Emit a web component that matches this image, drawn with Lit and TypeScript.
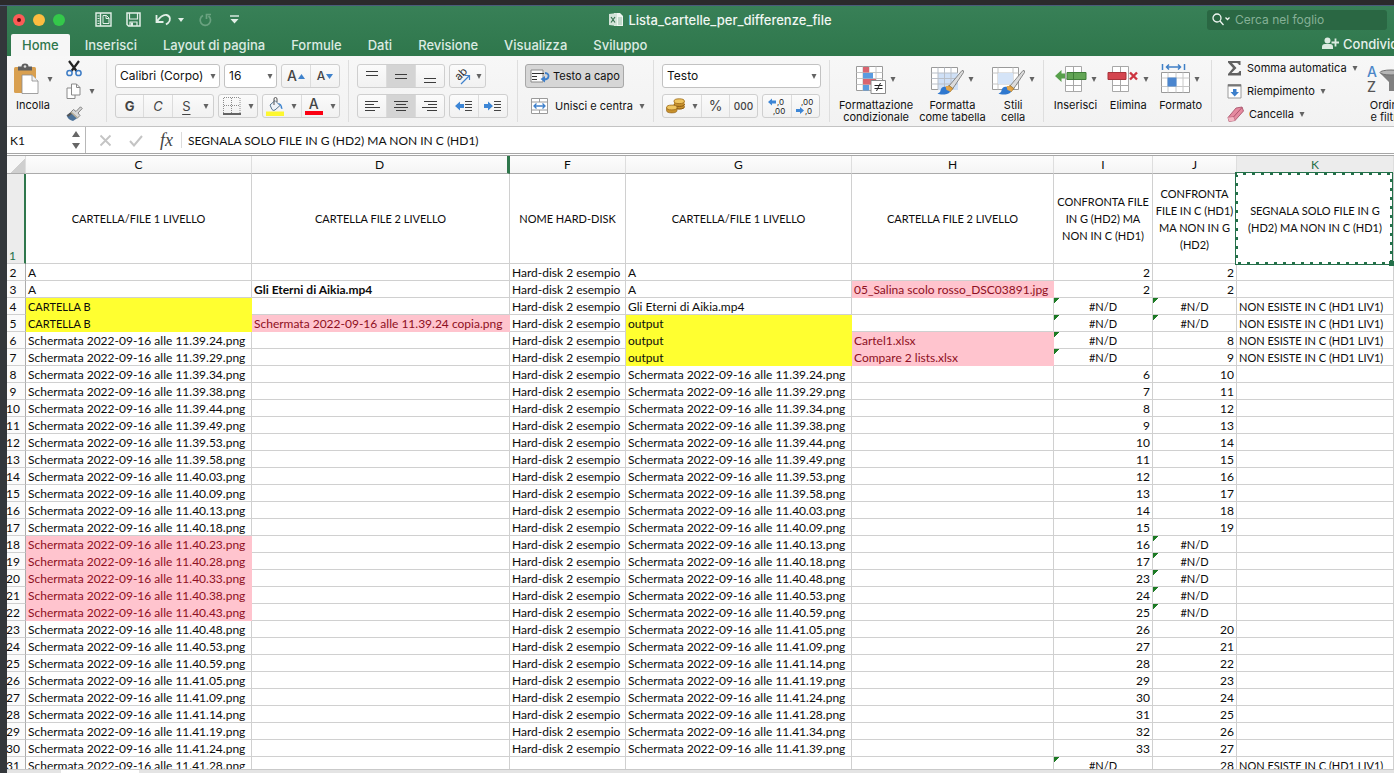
import { LitElement, html, svg, css, nothing } from "lit";
import { customElement, property } from "lit/decorators.js";
import { classMap } from "lit/directives/class-map.js";

type Tone = "plain" | "caps" | "yellow" | "yellow caps" | "pink" | "bold" | "num" | "error";
interface Cell { text: string; tone: Tone; }

const COLUMNS = ["C", "D", "F", "G", "H", "I", "J", "K"];
const HEADINGS = [
  "CARTELLA/FILE 1 LIVELLO",
  "CARTELLA FILE 2 LIVELLO",
  "NOME HARD-DISK",
  "CARTELLA/FILE 1 LIVELLO",
  "CARTELLA FILE 2 LIVELLO",
  "CONFRONTA FILE IN G (HD2) MA NON IN C (HD1)",
  "CONFRONTA FILE IN C (HD1) MA NON IN G (HD2)",
  "SEGNALA SOLO FILE IN G (HD2) MA NON IN C (HD1)",
];

const TIMES_C = "39.24 39.29 39.34 39.38 39.44 39.49 39.53 39.58 40.03 40.09 40.13 40.18 40.23 40.28 40.33 40.38 40.43 40.48 40.53 40.59 41.05 41.09 41.14 41.19 41.24 41.28".split(" ");
const TIMES_G = "39.24 39.29 39.34 39.38 39.44 39.49 39.53 39.58 40.03 40.09 40.13 40.18 40.48 40.53 40.59 41.05 41.09 41.14 41.19 41.24 41.28 41.34 41.39".split(" ");
const shot = (t: string) => `Schermata 2022-09-16 alle 11.${t}.png`;
const cell = (text: string | number = "", tone: Tone = "plain"): Cell => ({ text: String(text), tone });
const ND = cell("#N/D", "error");

function columnC(r: number): Cell {
  if (r < 4) return cell("A");
  if (r < 6) return cell("CARTELLA B", "yellow caps");
  return cell(shot(TIMES_C[r - 6]), r >= 18 && r <= 22 ? "pink" : "plain");
}
function columnD(r: number): Cell {
  if (r === 3) return cell("Gli Eterni di Aikia.mp4", "bold");
  if (r === 5) return cell("Schermata 2022-09-16 alle 11.39.24 copia.png", "pink");
  return cell();
}
function columnG(r: number): Cell {
  if (r < 4) return cell("A");
  if (r === 4) return cell("Gli Eterni di Aikia.mp4");
  if (r < 8) return cell("output", "yellow");
  return r < 31 ? cell(shot(TIMES_G[r - 8])) : cell();
}
function columnH(r: number): Cell {
  if (r === 3) return cell("05_Salina scolo rosso_DSC03891.jpg", "pink");
  if (r === 6) return cell("Cartel1.xlsx", "pink");
  if (r === 7) return cell("Compare 2 lists.xlsx", "pink");
  return cell();
}
function columnI(r: number): Cell {
  if (r < 4) return cell(2, "num");
  if (r < 8 || r === 31) return ND;
  return cell(r < 20 ? r - 2 : r + 3, "num");
}
function columnJ(r: number): Cell {
  if (r < 4) return cell(2, "num");
  if (r < 6 || (r >= 18 && r <= 22)) return ND;
  return cell(r < 18 ? r + 2 : r - 3, "num");
}
function columnK(r: number): Cell {
  return (r >= 4 && r <= 7) || r === 31 ? cell("NON ESISTE IN C (HD1 LIV1)", "caps") : cell();
}
const ROWS = Array.from({ length: 30 }, (_, i) => i + 2).map((r) => ({
  number: r,
  cells: [columnC(r), columnD(r), cell(r < 31 ? "Hard-disk 2 esempio" : ""), columnG(r), columnH(r), columnI(r), columnJ(r), columnK(r)],
}));

const icon = (w: number, h: number, body: unknown) =>
  html`<svg width=${w} height=${h} viewBox="0 0 ${w} ${h}" fill="none" aria-hidden="true">${body}</svg>`;

const arrow = html`<svg width="6" height="5" viewBox="0 0 6 5" aria-hidden="true"><path d="M.5 0h5L3 5z" fill="#636363"/></svg>`;

const lines = (rows: number[][]) =>
  icon(18, 16, svg`${rows.map(([x, y, w]) => svg`<path d="M${x} ${y + 0.5}h${w}" stroke="#3c3c3c"/>`)}`);

const brush = svg`
  <path d="M31 6.500 18 22l3.500 3L32.500 8.500q.6-2.500-1.500-2z" fill="#dcdcdc" stroke="#707070" stroke-width=".8"/>
  <path d="m18 21.500-3 2 4 4.500 3-3.500z" fill="#e0a040" stroke="#8a6420" stroke-width=".6"/>
  <path d="M15 23c-3-1-5 1-5.500 3.500-.3 2-1.500 2.500-3 3 3 1.800 10 1.500 12.500-1.500z" fill="#2f78cf"/>
  <path d="M14.500 22.500c2-1.500 6 1 5 5l-4-1.500z" fill="#e3a64c"/>`;

const ICONS = {
  sidebar: icon(17, 15, svg`<path d="M1 1h15v13H1zM5.500 1v13" stroke="#e3efe8" stroke-width="1.400"/><path d="M2.500 4h2M2.500 6.500h2M2.500 9h2M2.500 11.500h2" stroke="#e3efe8"/><path d="M8 3.500h3.500L14 6v5.500H8zM11 3.500V6.500h3" stroke="#e3efe8"/>`),
  save: icon(15, 15, svg`<path d="M1 1h13v13H2.500L1 12.500z" stroke="#e3efe8" stroke-width="1.500"/><path d="M3.500 1v6h8V1" stroke="#e3efe8" stroke-width="1.200"/><path d="M4 14v-4h7v4" stroke="#e3efe8" stroke-width="1.200"/><path d="M5 10.500h2V14H5z" fill="#e3efe8"/>`),
  undo: icon(17, 13, svg`<path d="M1.500 2v7h7M2 8.500C5 4 8 1.500 11.500 2c4 .8 4.500 5.500 1.500 8l-2 1.500" stroke="#e3efe8" stroke-width="1.800"/>`),
  redo: icon(14, 15, svg`<path d="M5 3.500A5.200 5.200 0 1 0 10.500 4M13 2.500H8.500V7" stroke="#6aa280" stroke-width="1.700"/>`),
  more: icon(9, 9, svg`<path d="M0 1h9" stroke="#e3efe8" stroke-width="1.400"/><path d="M.5 4h8l-4 4.500z" fill="#e3efe8"/>`),
  smallArrow: icon(6, 4, svg`<path d="M0 0h6L3 4z" fill="#e3efe8"/>`),
  workbook: icon(14, 15, svg`<path d="M5 1h6l3 3v10H5z" fill="#eef5f0"/><path d="M9 6h4M9 8h4M9 10h4M9 12h4" stroke="#7fae92" stroke-width=".8"/><path d="M0 2l8-1v13l-8-1z" fill="#d3e3d9"/><path d="m2 5 4 5.500M6 5l-4 5.500" stroke="#35704e" stroke-width="1.200"/>`),
  search: icon(19, 13, svg`<circle cx="5" cy="5" r="4" stroke="#f0f6f2" stroke-width="1.300"/><path d="m8 8 3.500 4M13.500 4.500 15.500 6.500 17.500 4.500" stroke="#f0f6f2" stroke-width="1.300"/>`),
  person: icon(17, 13, svg`<circle cx="5.500" cy="3.500" r="3" fill="#dcebe2"/><path d="M0 12V10q0-3 3-3h5q3 0 3 3v2z" fill="#dcebe2"/><path d="M13.500 1.500v8M9.500 5.500h8" stroke="#dcebe2" stroke-width="1.800"/>`),
  paste: icon(26, 32, svg`<rect x="1" y="4" width="22" height="26" rx="1.500" fill="#d9a050"/><path d="M5 3.500h3.500a3.500 3 0 0 1 7 0H19v4H5z" fill="#5e5e5e"/><circle cx="12" cy="3.500" r="1.300" fill="#ddd"/><path d="M9 12h10l6 6v12.500H9z" fill="#fff" stroke="#8a8a8a" stroke-width=".8"/><path d="M19 12v6h6" stroke="#8a8a8a" stroke-width=".8" fill="#f2f2f2"/>`),
  cut: icon(16, 17, svg`<path d="M3 1 10.500 11M13 1 5.500 11" stroke="#222" stroke-width="2.200"/><circle cx="3.500" cy="13" r="2.600" stroke="#3d7cc5" stroke-width="1.500"/><circle cx="12.500" cy="13" r="2.600" stroke="#3d7cc5" stroke-width="1.500"/>`),
  copy: icon(16, 17, svg`<path d="M1 5h5l3 3v7.500H1z" fill="#fff" stroke="#8a8a8a"/><path d="M5.500 1h5l3.500 3.500V12H5.500z" fill="#fff" stroke="#8a8a8a"/><path d="M10.500 1v3.500H14" stroke="#8a8a8a"/>`),
  painter: icon(17, 16, svg`<path d="m14.500.8-4.500 4.700-2.500-2L5 6l6.500 6 2.500-2.500-2-2.500L16.200 2.500z" fill="#d8d8d8" stroke="#777" stroke-width=".9"/><path d="M5 6 .5 9.500q2 4.500 6.500 5.500l4.500-3z" fill="#4d7299"/><path d="M5 6 .8 9.300l1.500 1.500L6.500 7.400z" fill="#555"/><path d="m4.800 6 6.500 6" stroke="#b9b09a" stroke-width="1.400"/>`),
  borders: icon(18, 18, svg`<path d="M1 .5h16M1 8.500h16M.5 1v16M8.500 1v16M17 1v16" stroke="#8c8c8c" stroke-dasharray="1 1"/><path d="M0 17h18" stroke="#333" stroke-width="1.500"/>`),
  fill: icon(18, 19, svg`<path d="m4 8 5-4.500 5 5-5 4.500q-2 1-3-.5z" fill="#eef3f8" stroke="#58768f"/><path d="M8 8V2q0-1.500 1.500-1.500T11 2v3" stroke="#555"/><path d="M12 6q4 0 4.500 6-2 .5-2-3z" fill="#3c83cf"/><path d="M0 14.500h18V19H0z" fill="#fdf730"/>`),
  orient: icon(19, 18, svg`<text x="0" y="0" transform="translate(6 14) rotate(-45)" font-size="11" font-family="Inter, sans-serif" fill="#333">ab</text><path d="m8 17 8-8M11.500 8.500H16.500v4.500" stroke="#3f82cc" stroke-width="1.200"/>`),
  indentOut: icon(18, 14, svg`<path d="M10 2.500h7M10 5.500h7M10 8.500h7M10 11.500h7" stroke="#444"/><path d="m0 7 5-4.500v2.500h4v4H5v2.500z" fill="#3d86d6"/>`),
  indentIn: icon(18, 14, svg`<path d="M10 2.500h7M10 5.500h7M10 8.500h7M10 11.500h7" stroke="#444"/><path d="M9 7 4 2.500V5H0v4h4v2.500z" fill="#3d86d6"/>`),
  wrap: icon(20, 14, svg`<path d="M1 1h12v12H1z" fill="#fafafa" stroke="#8a8a8a"/><path d="M2 4.500h12M2 7.500h5M2 10.500h5" stroke="#333"/><path d="M15 4q4 .5 3.500 3.500T14 10.500" stroke="#3d7fcb" stroke-width="1.800"/><path d="M15 7v6.500L10.500 10z" fill="#3d7fcb"/>`),
  merge: icon(18, 17, svg`<path d="M.5.5h16v15H.5z" fill="#fff" stroke="#9a9a9a"/><path d="M1 4h15M1 12h15M8.500 1v3M8.500 12v3" stroke="#9a9a9a"/><path d="M4 8h9M5.500 5.500 3 8l2.500 2.500M11.500 5.500 14 8l-2.500 2.500" stroke="#3d7fcb" stroke-width="1.300"/>`),
  coins: icon(19, 16, svg`<path d="M8 3v6a5.200 2.400 0 0 0 10.500 0V3z" fill="#c8912c"/><path d="M8 6a5.200 2.400 0 0 0 10.500 0M8 8.500a5.200 2.400 0 0 0 10.500 0" stroke="#8a5a14"/><ellipse cx="13.200" cy="3.200" rx="5.200" ry="2.400" fill="#efc560" stroke="#9b6a1c" stroke-width=".8"/><path d="M.5 9.500v3a5.200 2.400 0 0 0 10.500 0v-3z" fill="#c8912c" stroke="#8a5a14" stroke-width=".6"/><ellipse cx="5.800" cy="9.500" rx="5.200" ry="2.400" fill="#efc560" stroke="#9b6a1c" stroke-width=".8"/>`),
  decUp: icon(18, 18, svg`<path d="m0 5 4-3.500v2h4v3H4v2z" fill="#3d86d6"/><text x="9" y="8" font-size="8" font-family="Inter, sans-serif" fill="#222">,0</text><text x="5" y="17" font-size="8" font-family="Inter, sans-serif" fill="#222">,00</text>`),
  decDown: icon(18, 18, svg`<path d="m8 13.500-4-3.500v2H0v3h4v2z" fill="#3d86d6"/><text x="5" y="8" font-size="8" font-family="Inter, sans-serif" fill="#222">,00</text><text x="9" y="17" font-size="8" font-family="Inter, sans-serif" fill="#222">,0</text>`),
  conditional: icon(30, 30, svg`<path d="M.5 2.500h26v24H.5z" fill="#fff" stroke="#9a9a9a"/><path d="M.5 8.500h26M.5 14.500h26M.5 20.500h26M7 2.500v24M13 2.500v24M20 2.500v24" stroke="#c4c4c4"/><path d="M7 3h6v5.500H7zM7 15h13v5.500H7z" fill="#d96470"/><path d="M7 9h10v5.500H7zM7 21h6v5.500H7z" fill="#5a9be0"/><path d="M15 16.500h14.500v13H15z" fill="#fff" stroke="#8a8a8a"/><path d="M18.500 21.500h8M18.500 24.500h8M24.500 19l-4 8" stroke="#222"/>`),
  tableFormat: icon(33, 31, svg`<path d="M.5 3.500h26v22H.5z" fill="#fff" stroke="#9a9a9a"/><path d="M7 9h20v17H7z" fill="#cfe0f6"/><path d="M.5 9h26M.5 14.500h26M.5 20h26M7 3.500v22M13.500 3.500v22M20 3.500v22" stroke="#b9bfc8"/>${brush}`),
  cellStyles: icon(33, 31, svg`<path d="M.5 3.500h26v22H.5z" fill="#fff" stroke="#9a9a9a"/><path d="M.5 9h26M.5 20h26M6 3.500v22M21 3.500v22" stroke="#c4c4c4"/><path d="M6 9h15v11H6z" fill="#d5e4f7"/>${brush}`),
  insert: icon(32, 28, svg`<path d="M10.500 1.500h16v25h-16zM18.500 1.500v25M10.500 20.500h16M10.500 14h16" fill="#fff" stroke="#a8a8a8"/><path d="M12 7.500h19v7H12z" fill="#62a555" stroke="#3f7d38"/><path d="M18.500 8v6" stroke="#3f7d38"/><path d="m0 11 6.500-6v3.500H10v5H6.500V17z" fill="#57a04b"/>`),
  remove: icon(32, 28, svg`<path d="M5.500 1.500h16v25h-16zM13.500 1.500v25M5.500 20.500h16" fill="#fff" stroke="#a8a8a8"/><path d="M1 7.500h18v7H1z" fill="#d4454f" stroke="#a8333b"/><path d="m23 7.500 7 7M30 7.500l-7 7" stroke="#cd3540" stroke-width="2.400"/>`),
  format: icon(29, 30, svg`<path d="M.5 8.500h28v20H.5z" fill="#fff" stroke="#9a9a9a"/><path d="M.5 14h28M.5 22.500h28M7 8.500v20M15 8.500v20M22 8.500v20" stroke="#c8c8c8"/><path d="M6.500 13.500h9v9h-9z" fill="#4b86cf"/><path d="M1.500 0v6M23.500 0v6M6 3h13M8 .5 5.500 3 8 5.500M17 .5 19.500 3 17 5.500" stroke="#3f7fc6" stroke-width="1.500"/>`),
  sum: icon(15, 16, svg`<path d="M1 1h12.500v4H12Q11.500 3 9.500 3H5l4.500 5L4.500 13H10q2 0 2.500-2H14v4.500H1V14l5-6-5-5.500z" fill="#606060"/>`),
  down: icon(15, 16, svg`<path d="M1 1.500h13v13.500H1z" fill="#fff" stroke="#9a9a9a"/><path d="M1 2.500h13" stroke="#777" stroke-width="2"/><path d="M6 6h3.500v3H12l-4.300 4.500L3.500 9H6z" fill="#3d7fcb"/>`),
  eraser: icon(17, 16, svg`<path d="M1 11.500 9 2l6-1 1.500 4L8 14.500l-6 1z" fill="#e58aa0" stroke="#a04a62" stroke-width=".8"/><path d="m1.500 11.500 5-.5 1.500 4M6.500 11 15 1.500" stroke="#a04a62" stroke-width=".8"/><path d="m1 11.500 5.500-.5 1.500 3.500-6 1z" fill="#f3b6c3"/>`),
  sort: icon(40, 32, svg`<text x="0" y="14" font-size="14" font-weight="500" font-family="Inter, sans-serif" fill="#4a86c8">A</text><text x="0" y="29" font-size="14" font-weight="500" font-family="Inter, sans-serif" fill="#555">Z</text><path d="M13 10h22l-8 9v9h-5v-9z" fill="#808080"/><ellipse cx="24" cy="9.500" rx="11" ry="2.500" fill="#b5b5b5" stroke="#707070"/>`),
  cancel: icon(13, 13, svg`<path d="m1.500 1.500 10 10M11.500 1.500l-10 10" stroke="#c4c4c4" stroke-width="1.800"/>`),
  confirm: icon(14, 13, svg`<path d="m1 7 4 4.500L13 2" stroke="#c4c4c4" stroke-width="2"/>`),
};

@customElement("excel-titlebar")
class ExcelTitlebar extends LitElement {
  static styles = css`
    :host { display: block; background: linear-gradient(#388057, #2f774c); color: #dcebe2; font-family: Inter, "Liberation Sans", sans-serif; }
    button { border: 0; padding: 0; background: none; color: inherit; font: inherit; display: flex; align-items: center; }
    svg { flex: none; display: block; }
    .bar { display: flex; height: 27px; align-items: center; }
    .tools { width: 240px; flex: none; display: flex; align-items: center; padding-left: 6px; box-sizing: border-box; }
    .lights { display: flex; gap: 8px; margin-right: 30px; }
    .light { width: 12px; height: 12px; border-radius: 50%; justify-content: center; }
    .close { background: #fc5b57; }
    .close::after { content: ""; width: 4px; height: 4px; border-radius: 50%; background: #5b0a08; }
    .min { background: #fdbc40; }
    .max { background: #34c84a; }
    .quick { display: flex; align-items: center; gap: 14px; }
    .undo { gap: 6px; }
    .redo { margin-right: 4px; }
    .title { flex: 1; margin: 0; display: flex; justify-content: center; align-items: center; gap: 5px; font-size: 13px; font-weight: 500; color: #f0f6f2; }
    .find { width: 200px; flex: none; box-sizing: border-box; padding: 0 7px 0 13px; }
    .field { display: flex; align-items: center; gap: 4px; height: 20px; background: #2a6743; border-radius: 3px; padding-left: 5px; }
    .field input { flex: 1; min-width: 0; border: 0; outline: 0; background: none; color: #fff; font: 12px Inter, sans-serif; padding: 0; }
    .field input::placeholder { color: #86b197; opacity: 1; }
    .tabs { display: flex; height: 23px; align-items: flex-end; padding-left: 4px; gap: 2px; overflow: hidden; }
    .tab { height: 22px; padding: 0 12px; font-size: 13px; font-weight: 500; white-space: nowrap; flex: none; }
    .tab.active { background: #f6f6f6; color: #2f774c; border-radius: 2px 2px 0 0; padding: 0 11px; margin-right: 1px; }
    .share { margin-left: auto; width: 72px; flex: none; height: 25px; gap: 4px; font-size: 13px; font-weight: 500; white-space: nowrap; color: #e6f1ea; }
  `;
  render() {
    const tabs = ["Home", "Inserisci", "Layout di pagina", "Formule", "Dati", "Revisione", "Visualizza", "Sviluppo"];
    return html`
      <div class="bar">
        <div class="tools">
          <div class="lights">
            <button class="light close" aria-label="Chiudi"></button>
            <button class="light min" aria-label="Riduci"></button>
            <button class="light max" aria-label="Ingrandisci"></button>
          </div>
          <div class="quick">
            <button aria-label="Modelli">${ICONS.sidebar}</button>
            <button aria-label="Salva">${ICONS.save}</button>
            <button class="undo" aria-label="Annulla">${ICONS.undo}${ICONS.smallArrow}</button>
            <button class="redo" aria-label="Ripeti">${ICONS.redo}</button>
            <button aria-label="Personalizza">${ICONS.more}</button>
          </div>
        </div>
        <h1 class="title">${ICONS.workbook}Lista_cartelle_per_differenze_file</h1>
        <div class="find">
          <div class="field">${ICONS.search}<input type="search" aria-label="Cerca nel foglio" placeholder="Cerca nel foglio"></div>
        </div>
      </div>
      <nav class="tabs">
        ${tabs.map((t, i) => html`<button class=${classMap({ tab: true, active: i === 0 })}>${t}</button>`)}
        <button class="share">${ICONS.person}Condividi</button>
      </nav>`;
  }
}

@customElement("excel-ribbon")
class ExcelRibbon extends LitElement {
  static styles = css`
    :host { display: flex; height: 70px; overflow: hidden; background: linear-gradient(#f7f7f7, #f2f2f2); border-bottom: 1px solid #c3c3c3; color: #111; font: 11px/12px Inter, "Liberation Sans", sans-serif; }
    button, select { font: inherit; color: inherit; margin: 0; }
    button { border: 0; background: none; padding: 0; display: flex; align-items: center; justify-content: center; white-space: nowrap; flex: none; }
    svg { flex: none; display: block; overflow: visible; }
    .group { flex: none; display: flex; padding: 0 8px; position: relative; box-sizing: border-box; }
    .group::after { content: ""; position: absolute; right: 0; top: 4px; bottom: 4px; width: 1px; background: #dedede; }
    .group:last-child::after { display: none; }
    .stack { display: flex; flex-direction: column; gap: 6px; padding-top: 8px; }
    .row { display: flex; gap: 4px; }
    .set { display: flex; height: 24px; box-sizing: border-box; border: 1px solid #cfcfcf; border-radius: 3px; background: linear-gradient(#fbfbfb, #f1f1f1); overflow: hidden; }
    .set button { flex: 1; border-left: 1px solid #dcdcdc; }
    .set button:first-child { border-left: 0; }
    .set button.on { background: #d4d4d4; }
    .set .drop { flex: none; width: 13px; border-left: 0; }
    .combo { position: relative; display: flex; height: 24px; box-sizing: border-box; border: 1px solid #c2c2c2; border-radius: 3px; background: #fff; }
    .combo select { appearance: none; border: 0; outline: 0; background: none; flex: 1; min-width: 0; padding: 0 12px 0 4px; font-size: 12px; }
    .combo svg { position: absolute; right: 3px; top: 9px; pointer-events: none; }
    .font { width: 105px; }
    .size { width: 53px; }
    .grow { width: 59px; font-size: 14px; font-weight: 500; color: #444; }
    .grow button { gap: 1px; }
    .small { font-size: 12px; }
    .style { width: 99px; font-size: 13px; color: #444; }
    .g { font-weight: 700; }
    .c { font-style: italic; }
    .s { text-decoration: underline; text-underline-offset: 3px; }
    .edge { width: 40px; }
    .paint { width: 78px; }
    .ink { flex-direction: column; font-size: 14px; font-weight: 500; color: #444; }
    .ink::after { content: ""; width: 18px; height: 4px; background: #fb0012; margin-top: 1px; }
    .align { width: 88px; }
    .turn { width: 37px; }
    .turn button { gap: 4px; }
    .indent { width: 59px; }
    .g-font { width: 242px; }
    .g-align { width: 169px; }
    .g-wrap { width: 136px; padding: 0 7px; }
    .g-num { width: 176px; }
    .wide { height: 24px; box-sizing: border-box; gap: 3px; justify-content: flex-start; padding: 0 6px; }
    .wide.on { border: 1px solid #a8a8a8; border-radius: 3px; background: #d6d6d6; padding: 0 4px; width: 99px; }
    .wide svg:last-child { margin-left: 3px; }
    .format { width: 159px; }
    .money { width: 96px; color: #444; }
    .money button { flex: none; width: 28px; }
    .money button:first-child { width: 25px; }
    .money .pct { font-size: 14px; }
    .money .thousands { font-size: 10px; font-weight: 500; }
    .decimals { width: 58px; }
    .big { flex-direction: column; justify-content: flex-start; padding-top: 6px; gap: 3px; }
    .pic { display: flex; align-items: center; height: 34px; gap: 4px; }
    .label { white-space: pre; text-align: center; }
    .g-paste { width: 100px; padding-left: 6px; gap: 13px; }
    .g-paste .pic { gap: 8px; }
    .clip { display: flex; flex-direction: column; padding-top: 4px; gap: 6px; align-items: flex-start; }
    .clip button { gap: 7px; }
    .g-styles { width: 214px; gap: 6px; padding-left: 9px; }
    .g-cells { width: 168px; gap: 10px; justify-content: center; }
    .g-edit { padding-left: 15px; gap: 14px; }
    .list { display: flex; flex-direction: column; padding-top: 4px; gap: 7px; align-items: flex-start; width: 126px; }
    .list button { gap: 5px; height: 16px; }
  `;
  private big(pic: unknown, label: string, drop = true) {
    return html`<button class="big"><span class="pic">${pic}${drop ? arrow : nothing}</span><span class="label">${label}</span></button>`;
  }
  render() {
    return html`
      <div class="group g-paste">
        ${this.big(ICONS.paste, "Incolla")}
        <div class="clip">
          <button aria-label="Taglia">${ICONS.cut}</button>
          <button aria-label="Copia">${ICONS.copy}${arrow}</button>
          <button aria-label="Copia formato">${ICONS.painter}</button>
        </div>
      </div>
      <div class="group g-font"><div class="stack">
        <div class="row">
          <div class="combo font"><select aria-label="Tipo di carattere"><option>Calibri (Corpo)</option></select>${arrow}</div>
          <div class="combo size"><select aria-label="Dimensione carattere"><option>16</option></select>${arrow}</div>
          <div class="set grow">
            <button aria-label="Aumenta carattere">A${icon(7, 5, svg`<path d="M0 5h7L3.500 0z" fill="#3f82cc"/>`)}</button>
            <button class="small" aria-label="Riduci carattere">A${icon(7, 5, svg`<path d="M0 0h7L3.500 5z" fill="#3f82cc"/>`)}</button>
          </div>
        </div>
        <div class="row">
          <div class="set style">
            <button class="g">G</button><button class="c">C</button><button class="s">S</button><button class="drop" aria-label="Sottolineature">${arrow}</button>
          </div>
          <div class="set edge"><button aria-label="Bordi">${ICONS.borders}</button><button class="drop" aria-label="Altri bordi">${arrow}</button></div>
          <div class="set paint">
            <button aria-label="Riempimento">${ICONS.fill}</button><button class="drop" aria-label="Colori riempimento">${arrow}</button>
            <button class="ink">A</button><button class="drop" aria-label="Colori carattere">${arrow}</button>
          </div>
        </div>
      </div></div>
      <div class="group g-align"><div class="stack">
        <div class="row">
          <div class="set align">
            <button aria-label="In alto">${lines([[3, 3, 12], [3, 7, 12]])}</button>
            <button class="on" aria-label="Al centro in verticale">${lines([[3, 6, 12], [3, 10, 12]])}</button>
            <button aria-label="In basso">${lines([[3, 10, 12], [3, 14, 12]])}</button>
          </div>
          <div class="set turn"><button aria-label="Orientamento">${ICONS.orient}${arrow}</button></div>
        </div>
        <div class="row">
          <div class="set align">
            <button aria-label="A sinistra">${lines([[2, 3, 13], [2, 6, 9], [2, 9, 15], [2, 12, 10]])}</button>
            <button class="on" aria-label="Al centro">${lines([[2, 3, 14], [4, 6, 10], [2, 9, 14], [4, 12, 10]])}</button>
            <button aria-label="A destra">${lines([[3, 3, 13], [7, 6, 9], [1, 9, 15], [6, 12, 10]])}</button>
          </div>
          <div class="set indent"><button aria-label="Riduci rientro">${ICONS.indentOut}</button><button aria-label="Aumenta rientro">${ICONS.indentIn}</button></div>
        </div>
      </div></div>
      <div class="group g-wrap"><div class="stack">
        <button class="wide on">${ICONS.wrap}<span>Testo a capo</span></button>
        <button class="wide">${ICONS.merge}<span>&nbsp;Unisci e centra</span>${arrow}</button>
      </div></div>
      <div class="group g-num"><div class="stack">
        <div class="combo format"><select aria-label="Formato numero"><option>Testo</option></select>${arrow}</div>
        <div class="row">
          <div class="set money">
            <button aria-label="Valuta">${ICONS.coins}</button><button class="drop" aria-label="Altre valute">${arrow}</button>
            <button class="pct">%</button><button class="thousands">000</button>
          </div>
          <div class="set decimals"><button aria-label="Aumenta decimali">${ICONS.decUp}</button><button aria-label="Diminuisci decimali">${ICONS.decDown}</button></div>
        </div>
      </div></div>
      <div class="group g-styles">
        ${this.big(ICONS.conditional, "Formattazione\ncondizionale")}
        ${this.big(ICONS.tableFormat, "Formatta\ncome tabella")}
        ${this.big(ICONS.cellStyles, "Stili\ncella")}
      </div>
      <div class="group g-cells">
        ${this.big(ICONS.insert, "Inserisci")}
        ${this.big(ICONS.remove, "Elimina")}
        ${this.big(ICONS.format, "Formato")}
      </div>
      <div class="group g-edit">
        <div class="list">
          <button>${ICONS.sum}<span>Somma automatica</span>${arrow}</button>
          <button>${ICONS.down}<span>Riempimento</span>${arrow}</button>
          <button>${ICONS.eraser}<span>Cancella</span>${arrow}</button>
        </div>
        ${this.big(ICONS.sort, "Ordina\ne filtra", false)}
      </div>`;
  }
}

@customElement("excel-formula-bar")
class ExcelFormulaBar extends LitElement {
  @property() cell = "";
  @property() value = "";
  static styles = css`
    :host { display: flex; height: 26px; align-items: center; background: #fff; border-bottom: 3px double #a6a6a6; color: #111; }
    input { border: 0; outline: 0; background: none; padding: 0; min-width: 0; color: inherit; font: 12px Lato, "Liberation Sans", sans-serif; }
    button { border: 0; background: none; padding: 0; display: flex; }
    .name { display: flex; align-items: center; width: 79px; height: 26px; box-sizing: border-box; border-right: 1px solid #b8b8b8; padding: 0 5px 0 3px; flex: none; }
    .name input { flex: 1; }
    .actions { display: flex; align-items: center; gap: 17px; padding: 0 8px 0 13px; border-right: 1px solid #dcdcdc; height: 16px; }
    .fx { font: italic 18px/16px "Liberation Serif", serif; color: #444; }
    .value { flex: 1; margin-left: 6px; }
  `;
  render() {
    return html`
      <div class="name">
        <input aria-label="Casella nome" .value=${this.cell}>
        ${icon(8, 20, svg`<path d="M4 1 8 7H0zM4 19l4-6H0z" fill="#666"/>`)}
      </div>
      <div class="actions">
        <button aria-label="Annulla">${ICONS.cancel}</button>
        <button aria-label="Invio">${ICONS.confirm}</button>
        <button class="fx">fx</button>
      </div>
      <input class="value" aria-label="Barra della formula" .value=${this.value}>`;
  }
}

@customElement("excel-sheet")
class ExcelSheet extends LitElement {
  static styles = css`
    :host { display: block; overflow: hidden; background: #fff; color: #0c0c0c; font: 12px/14px Lato, "Liberation Sans", sans-serif; }
    table { width: 100%; table-layout: fixed; border-collapse: separate; border-spacing: 0; }
    .w-n { width: 19px; } .w-C, .w-G { width: 226px; } .w-D { width: 258px; } .w-F { width: 116px; }
    .w-H { width: 202px; } .w-I { width: 99px; } .w-J { width: 84px; }
    th, td { box-sizing: border-box; padding: 2px 2px 0; border-right: 1px solid #d0d0d0; border-bottom: 1px solid #d0d0d0; font-weight: 400; white-space: nowrap; text-align: left; }
    .letter { height: 18px; padding: 0 2px; text-align: center; background: linear-gradient(#fdfdfd, #f4f4f4); border-bottom-color: #ababab; border-right-color: #dedede; }
    .letter.sel { background: #ececec; color: #24704a; }
    .letter.D { border-right: 3px solid #2f774c; }
    .corner { background: linear-gradient(135deg, #f7f7f7 58%, #cfcfcf 58%); }
    .n { text-align: center; padding: 2px 6px 0 0; border-right-color: #ababab; background: #fbfbfb; overflow: hidden; }
    .n.sel { height: 90px; vertical-align: bottom; color: #24704a; background: #ececec; border-right: 2px solid #2f774c; }
    .n span { display: flex; justify-content: center; }
    .head { text-align: center; white-space: normal; vertical-align: middle; font-size: 11px; line-height: 17px; padding: 0 2px; }
    .active { position: relative; padding: 0 4px; }
    .ants { position: absolute; top: -1px; left: -1px; width: 100%; height: calc(100% + 2px); overflow: visible; }
    .inner { x: 1px; y: 1px; width: calc(100% - 2px); height: calc(100% - 2px); }
    .handle { x: calc(100% - 3px); y: calc(100% - 3px); width: 5px; height: 5px; }
    .active span { position: relative; }
    .cell { height: 17px; overflow: hidden; }
    .caps { font-size: 11px; }
    .yellow { background: #ffff30; border-color: #ffff30; }
    .pink { background: #ffc4ce; border-color: #ffc4ce; color: #8e0f22; }
    .bold { font-weight: 700; }
    .num { text-align: right; }
    .error { text-align: center; font-size: 11px; background: linear-gradient(135deg, #1c7a24 4px, transparent 4px); }
  `;
  render() {
    return html`<table>
      <colgroup><col class="w-n">${COLUMNS.map((c) => html`<col class="w-${c}">`)}</colgroup>
      <thead><tr>
        <th class="letter corner"></th>
        ${COLUMNS.map((c) => html`<th scope="col" class="letter ${c} ${c === "K" ? "sel" : ""}">${c}</th>`)}
      </tr></thead>
      <tbody>
        <tr>
          <th scope="row" class="n sel"><span>1</span></th>
          ${HEADINGS.map((h, i) => i === 7
            ? html`<td class="head active">
                <svg class="ants" fill="none" aria-hidden="true">
                  <rect width="100%" height="100%" stroke="#24704a" stroke-width="2"/>
                  <rect class="inner" stroke="#24704a" stroke-width="2"/>
                  <rect class="inner" stroke="#fff" stroke-width="2" stroke-dasharray="6 3"/>
                  <rect class="handle" fill="#24704a"/>
                </svg><span>${h}</span></td>`
            : html`<td class="head">${h}</td>`)}
        </tr>
        ${ROWS.map((r) => html`<tr>
          <th scope="row" class="n"><span>${r.number}</span></th>
          ${r.cells.map((c) => html`<td class="cell ${c.tone}">${c.text}</td>`)}
        </tr>`)}
      </tbody>
    </table>`;
  }
}

@customElement("app-root")
class AppRoot extends LitElement {
  static styles = css`
    :host { display: flex; flex-direction: column; height: 100vh; box-sizing: border-box; overflow: hidden; background: #33373b; padding-left: 7px; }
    .desktop { height: 6px; flex: none; background: #2b2a2b; border-bottom: 1px solid #4a5c7a; box-sizing: border-box; margin-left: -7px; }
    excel-titlebar, excel-ribbon, excel-formula-bar { flex: none; }
    excel-sheet { flex: 1; min-height: 0; }
    .sheets { flex: none; height: 4px; background: #e4e4e4; border-top: 1px solid #c9c9c9; box-sizing: border-box; display: flex; padding-left: 54px; }
    .sheet { width: 78px; background: #fff; }
  `;
  render() {
    return html`
      <div class="desktop"></div>
      <excel-titlebar></excel-titlebar>
      <excel-ribbon></excel-ribbon>
      <excel-formula-bar cell="K1" value="SEGNALA SOLO FILE IN G (HD2) MA NON IN C (HD1)"></excel-formula-bar>
      <excel-sheet></excel-sheet>
      <div class="sheets"><div class="sheet"></div></div>`;
  }
}
